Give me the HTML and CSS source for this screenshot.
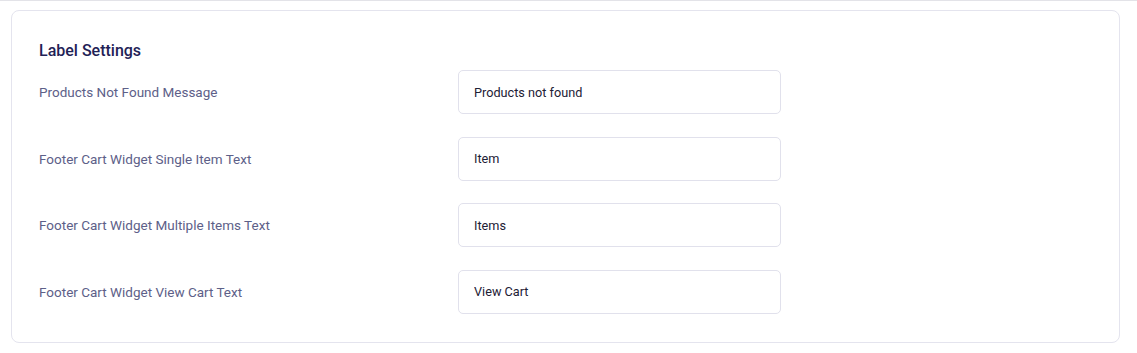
FILE: index.html
```html
<!DOCTYPE html>
<html lang="en">
<head>
  <meta charset="UTF-8">
  <title>Label Settings</title>
  <link rel="stylesheet" href="styles.css">
</head>
<body>
  <div class="page">
    <div class="card">
      <h2>Label Settings</h2>
      <div class="settings">
        <div class="row">
          <label for="notFound">Products Not Found Message</label>
          <input type="text" id="notFound" value="Products not found">
        </div>
        <div class="row">
          <label for="singleItem">Footer Cart Widget Single Item Text</label>
          <input type="text" id="singleItem" value="Item">
        </div>
        <div class="row">
          <label for="multiItems">Footer Cart Widget Multiple Items Text</label>
          <input type="text" id="multiItems" value="Items">
        </div>
        <div class="row">
          <label for="viewCart">Footer Cart Widget View Cart Text</label>
          <input type="text" id="viewCart" value="View Cart">
        </div>
      </div>
    </div>
  </div>
</body>
</html>
```

FILE: styles.css
```css
body {
  margin: 0;
  background-color: #ffffff;
  font-family: Roboto, 'Liberation Sans', sans-serif;
  border-top: 1px solid #e3e3e8;
}

.page {
  padding: 9px 17px 11px 11px;
}

.card {
  border: 1px solid #e4e4ee;
  border-radius: 8px;
  padding: 30px 27px 28px 27px;
}

h2 {
  margin: 0;
  font-size: 16px;
  font-weight: 500;
  line-height: 20px;
  color: #1f2256;
}

.settings {
  display: flex;
  flex-direction: column;
  gap: 22.67px;
  margin-top: 9px;
}

.row {
  display: grid;
  grid-template-columns: 419px 323px;
  align-items: center;
}

label {
  font-size: 13.5px;
  color: #5d6088;
}

input[type="text"] {
  box-sizing: border-box;
  height: 44px;
  width: 323px;
  padding: 0 15px;
  border: 1px solid #e1e1ec;
  border-radius: 5px;
  font-family: Roboto, 'Liberation Sans', sans-serif;
  font-size: 12.7px;
  color: #1d2035;
  background-color: #ffffff;
}
```
